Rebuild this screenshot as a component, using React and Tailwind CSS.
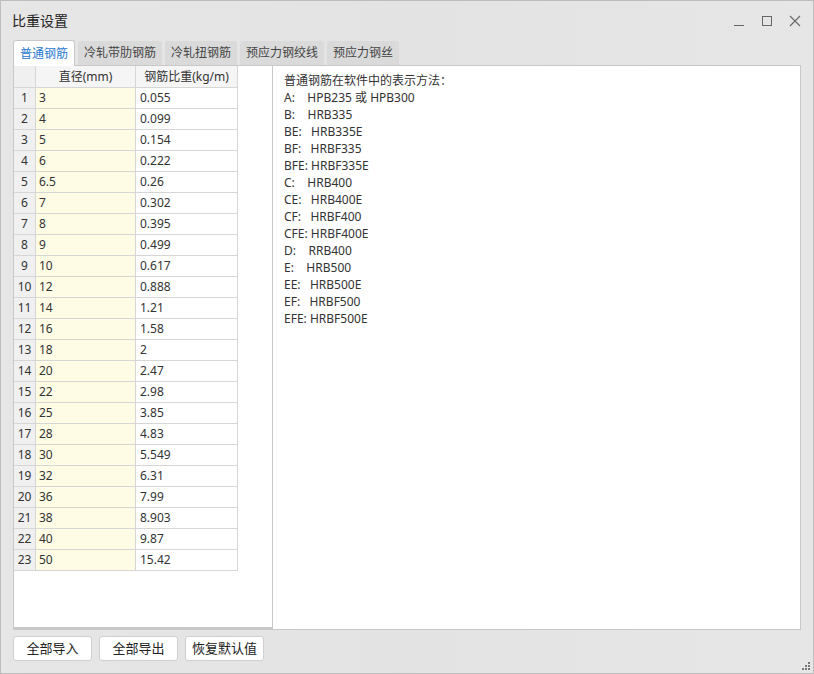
import React from "react";

const rows = [
  ["3", "0.055"], ["4", "0.099"], ["5", "0.154"], ["6", "0.222"], ["6.5", "0.26"],
  ["7", "0.302"], ["8", "0.395"], ["9", "0.499"], ["10", "0.617"], ["12", "0.888"],
  ["14", "1.21"], ["16", "1.58"], ["18", "2"], ["20", "2.47"], ["22", "2.98"],
  ["25", "3.85"], ["28", "4.83"], ["30", "5.549"], ["32", "6.31"], ["36", "7.99"],
  ["38", "8.903"], ["40", "9.87"], ["50", "15.42"],
];

const lines = [
  "普通钢筋在软件中的表示方法：",
  "A:    HPB235 或 HPB300",
  "B:    HRB335",
  "BE:   HRB335E",
  "BF:   HRBF335",
  "BFE: HRBF335E",
  "C:    HRB400",
  "CE:   HRB400E",
  "CF:   HRBF400",
  "CFE: HRBF400E",
  "D:    RRB400",
  "E:    HRB500",
  "EE:   HRB500E",
  "EF:   HRBF500",
  "EFE: HRBF500E",
];

const tabs = ["普通钢筋", "冷轧带肋钢筋", "冷轧扭钢筋", "预应力钢绞线", "预应力钢丝"];

export default function App() {
  return (
    <div
      className="w-[814px] h-[674px] border border-[#bdbdbd] bg-gradient-to-r from-[#e6e6e6] via-[#e3e3e3] to-[#e6e6e6] flex flex-col relative text-[#333]"
      style={{ fontFamily: '"Noto Sans", "Noto Sans CJK SC", sans-serif' }}
    >
      {/* title bar */}
      <div className="h-[39px] flex items-center pl-[11px] pr-[12px]">
        <span className="text-[14px] text-[#222] flex-1">比重设置</span>
        <div className="flex items-center gap-[16px] text-[#666]">
          <svg width="12" height="12" viewBox="0 0 12 12"><path d="M1 10.5h10" stroke="#666" strokeWidth="1" /></svg>
          <svg width="12" height="12" viewBox="0 0 12 12"><rect x="1.5" y="1.5" width="9" height="9" fill="none" stroke="#666" strokeWidth="1" /></svg>
          <svg width="12" height="12" viewBox="0 0 12 12"><path d="M1 1L11 11M11 1L1 11" stroke="#666" strokeWidth="1.1" /></svg>
        </div>
      </div>

      {/* tabs */}
      <div className="h-[25px] flex items-end gap-[3px] pl-[12px]">
        {tabs.map((t, i) =>
          i === 0 ? (
            <div key={t} className="h-[26px] px-[6px] flex items-center bg-white border border-b-0 border-[#c8c8c8] rounded-t-[3px] text-[12px] text-[#2a78d0] relative top-[1px]">
              {t}
            </div>
          ) : (
            <div key={t} className="h-[24px] px-[6px] flex items-center bg-[#dadada] rounded-t-[3px] text-[12px] text-[#444]">
              {t}
            </div>
          )
        )}
      </div>

      {/* content */}
      <div className="mx-[12px] h-[565px] flex border border-[#c8c8c8] bg-white">
        <div className="w-[259px] border-r border-b-2 border-[#c8c8c8] bg-white">
          <div className="grid grid-cols-[22px_100px_101px] text-[12px] border-r border-[#d6d6d6] w-fit">
            <div className="h-[22px] bg-[#f0f0f0] border-r border-b border-[#d6d6d6]" />
            <div className="h-[22px] bg-[#f5f5f5] border-r border-b border-[#d6d6d6] flex items-center justify-center">直径(mm)</div>
            <div className="h-[22px] bg-[#f5f5f5] border-b border-[#d6d6d6] flex items-center justify-center">钢筋比重(kg/m)</div>
            {rows.map(([d, w], i) => (
              <React.Fragment key={i}>
                <div className="h-[21px] bg-[#f0f0f0] border-r border-b border-[#d6d6d6] flex items-center justify-center">{i + 1}</div>
                <div className="h-[21px] bg-[#fffce6] border-r border-b border-[#d6d6d6] flex items-center pl-[3px]">{d}</div>
                <div className="h-[21px] bg-white border-b border-[#d6d6d6] flex items-center pl-[4px]">{w}</div>
              </React.Fragment>
            ))}
          </div>
        </div>
        <div className="flex-1 pl-[11px] pt-[6px] text-[12px] leading-[17px] whitespace-pre text-[#333]">
          {lines.map((l) => (
            <div key={l}>{l}</div>
          ))}
        </div>
      </div>

      {/* buttons */}
      <div className="flex gap-[7px] pl-[12px] mt-[6px]">
        {["全部导入", "全部导出", "恢复默认值"].map((b) => (
          <div key={b} className="w-[79px] h-[25px] bg-white border border-[#cfcfcf] rounded-[3px] flex items-center justify-center text-[13px] text-[#222]">
            {b}
          </div>
        ))}
      </div>

      {/* resize grip */}
      <svg className="absolute right-[3px] bottom-[3px]" width="8" height="8" viewBox="0 0 8 8">
        <rect x="6" y="0" width="2" height="2" fill="#777" />
        <rect x="3" y="3" width="2" height="2" fill="#777" />
        <rect x="6" y="3" width="2" height="2" fill="#777" />
        <rect x="0" y="6" width="2" height="2" fill="#777" />
        <rect x="3" y="6" width="2" height="2" fill="#777" />
        <rect x="6" y="6" width="2" height="2" fill="#777" />
      </svg>
    </div>
  );
}
